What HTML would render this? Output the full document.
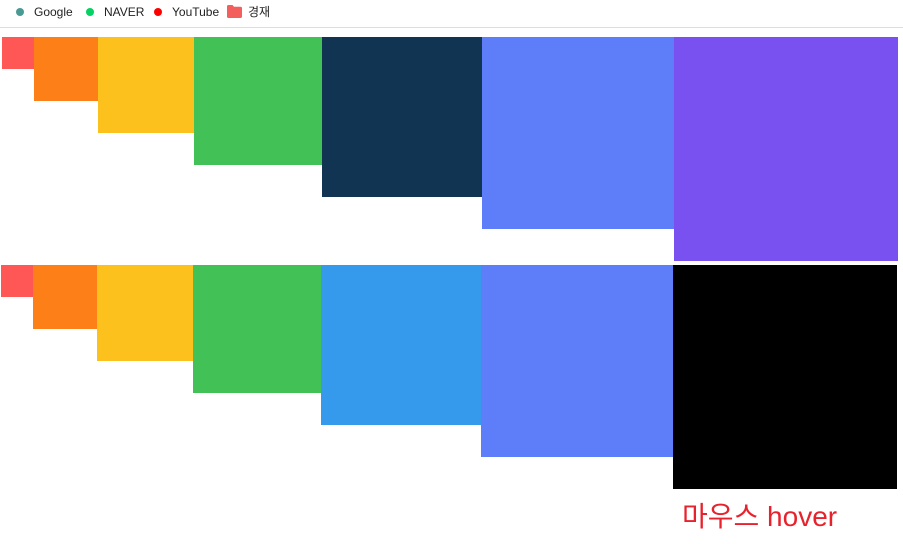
<!DOCTYPE html>
<html><head><meta charset="utf-8"><style>
body{margin:0;background:#fff;width:903px;height:544px;overflow:hidden;position:relative;font-family:"Liberation Sans","Noto Sans CJK KR",sans-serif}
.bar{position:absolute;left:0;top:0;width:903px;height:28px;border-bottom:1px solid #dedede;box-sizing:border-box}
.it{position:absolute;top:4px;font-size:12px;color:#222;line-height:16px}
.dot{position:absolute;top:8px;width:8px;height:8px;border-radius:50%}
.b{position:absolute}
.cap{position:absolute;left:682px;top:499px;font-size:28px;color:#e8222c;line-height:36px}
</style></head><body>
<div class="bar">
<div class="dot" style="left:16px;background:#4a9a94"></div><div class="it" style="left:34px">Google</div>
<div class="dot" style="left:86px;background:#04d263"></div><div class="it" style="left:104px">NAVER</div>
<div class="dot" style="left:154px;background:#f00"></div><div class="it" style="left:172px">YouTube</div>
<svg style="position:absolute;left:227px;top:5px" width="15" height="13" viewBox="0 0 15 13"><path d="M0 1.5Q0 0 1.5 0H5.5L7 1.8H13.5Q15 1.8 15 3.3V11.5Q15 13 13.5 13H1.5Q0 13 0 11.5Z" fill="#f25f5c"/></svg>
<div class="it" style="left:248px">경재</div>
</div>
<div class="b" style="left:2px;top:37px;width:32px;height:32px;background:#ff5656"></div>
<div class="b" style="left:34px;top:37px;width:64px;height:64px;background:#fd7f17"></div>
<div class="b" style="left:98px;top:37px;width:96px;height:96px;background:#fcc11c"></div>
<div class="b" style="left:194px;top:37px;width:128px;height:128px;background:#42c157"></div>
<div class="b" style="left:322px;top:37px;width:160px;height:160px;background:#123453"></div>
<div class="b" style="left:482px;top:37px;width:192px;height:192px;background:#5d7df9"></div>
<div class="b" style="left:674px;top:37px;width:224px;height:224px;background:#7951f1"></div>

<div class="b" style="left:1px;top:265px;width:32px;height:32px;background:#ff5656"></div>
<div class="b" style="left:33px;top:265px;width:64px;height:64px;background:#fd7f17"></div>
<div class="b" style="left:97px;top:265px;width:96px;height:96px;background:#fcc11c"></div>
<div class="b" style="left:193px;top:265px;width:128px;height:128px;background:#42c157"></div>
<div class="b" style="left:321px;top:265px;width:160px;height:160px;background:#359aec"></div>
<div class="b" style="left:481px;top:265px;width:192px;height:192px;background:#5d7df9"></div>
<div class="b" style="left:673px;top:265px;width:224px;height:224px;background:#000"></div>
<div class="cap">마우스 hover</div>
</body></html>
